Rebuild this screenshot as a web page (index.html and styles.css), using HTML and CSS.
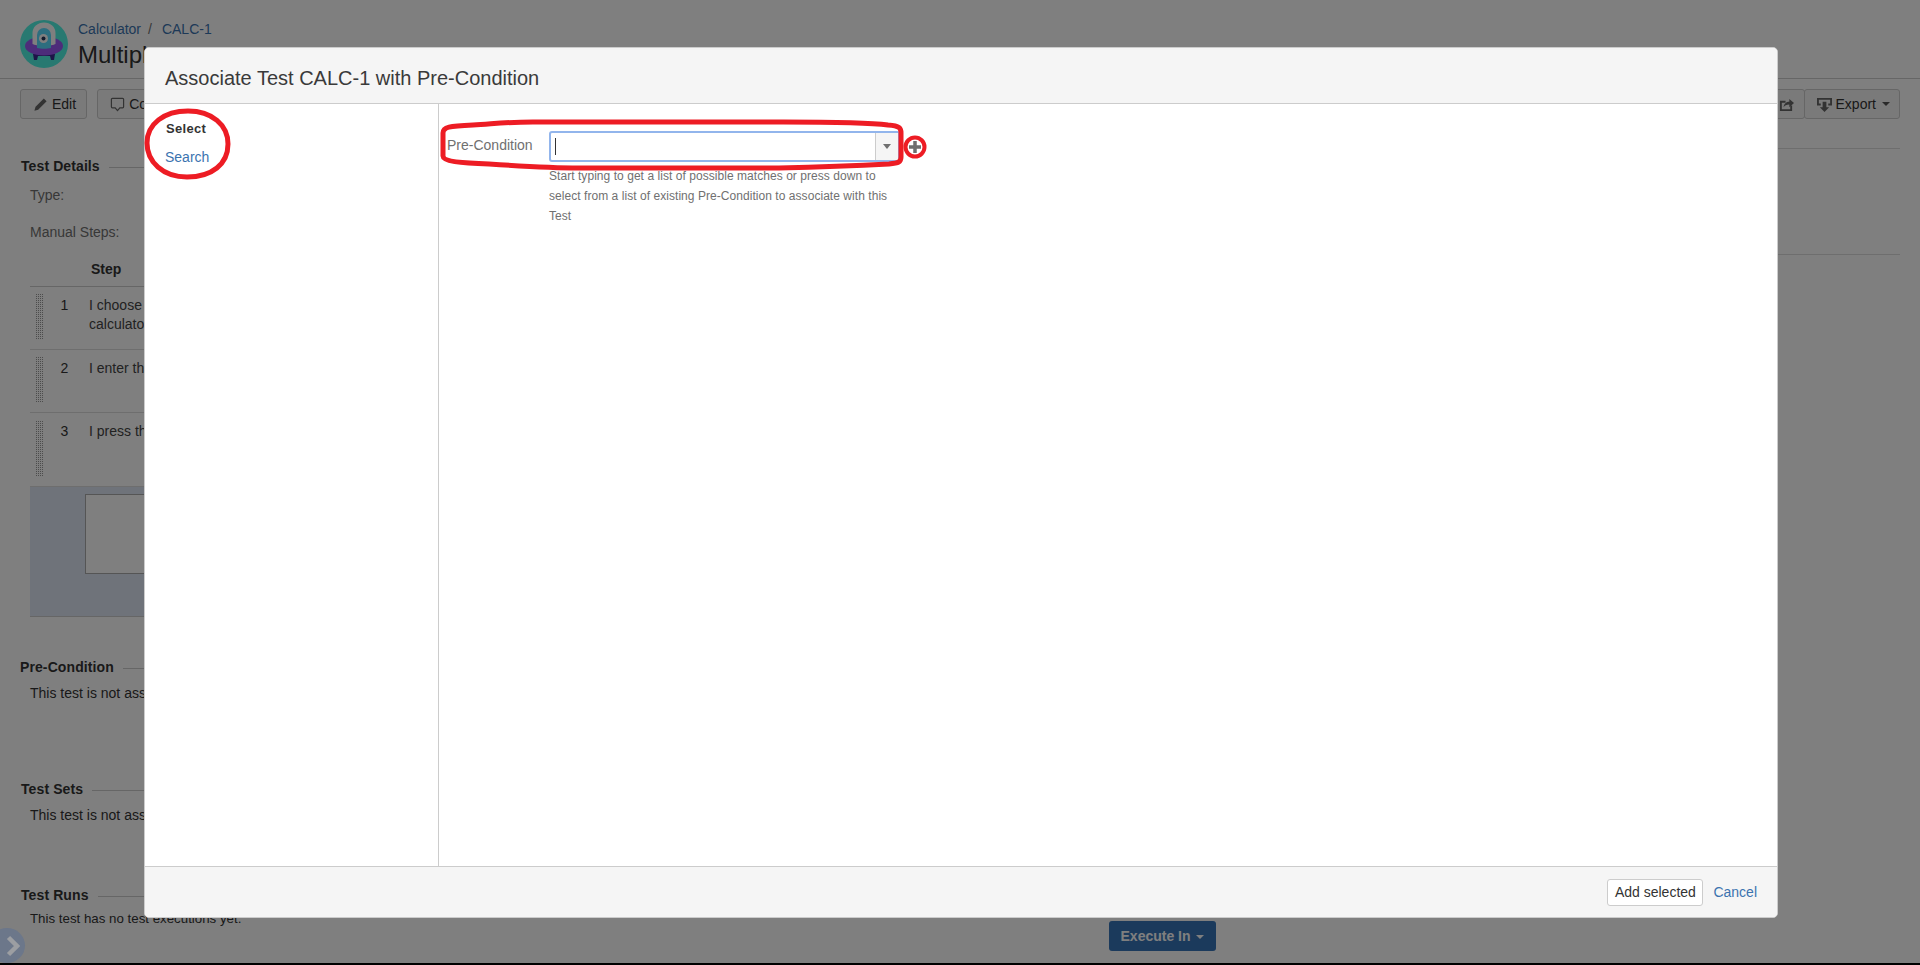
FILE: index.html
```html
<!DOCTYPE html>
<html lang="en">
<head>
    <meta charset="UTF-8">
    <title>CALC-1 Multiply</title>
    <link rel="stylesheet" href="styles.css">
</head>
<body>
    <div class="page">
        <header class="issue-header">
            <svg class="project-logo" viewBox="0 0 48 48">
                <circle cx="24" cy="24" r="24" fill="#50f2e2"/>
                <path d="M13 34l1 6h3l1-4h12l1 4h3l1-6z" fill="#3a2a90"/>
                <ellipse cx="24" cy="26" rx="19" ry="9.500" fill="#9a58f4"/>
                <path d="M12.500 24V13a11.500 10.500 0 0 1 23 0v11c-3 2-20 2-23 0z" fill="#fff"/>
                <path d="M17 28V15a7 7 0 0 1 14 0v13c-4 1-10 1-14 0z" fill="#5adcff"/>
                <circle cx="23.500" cy="18.500" r="4.500" fill="#fff"/>
                <circle cx="23.500" cy="18.500" r="2" fill="#26365a"/>
            </svg>
            <div class="issue-title">
                <div class="breadcrumbs"><a href="#">Calculator</a><span class="crumb-sep">/</span><a href="#">CALC-1</a></div>
                <h1>Multiply</h1>
            </div>
        </header>

        <div class="toolbar">
            <div class="btn-group">
                <button class="btn">
                    <svg class="btn-icon" viewBox="0 0 16 16"><path d="M11.500 1.500l3 3-9 9-4 1.200 1.200-4.200z" fill="#666"/></svg>
                    Edit
                </button>
                <button class="btn">
                    <svg class="btn-icon" viewBox="0 0 16 16"><path d="M2.500 1.500h11a1 1 0 0 1 1 1v8a1 1 0 0 1-1 1h-3l-2.500 3-2.500-3h-3a1 1 0 0 1-1-1v-8a1 1 0 0 1 1-1z" fill="none" stroke="#666" stroke-width="1.300"/></svg>
                    Comment
                </button>
            </div>
            <div class="btn-group btn-group-joined">
                <button class="btn">
                    <svg class="btn-icon" viewBox="0 0 16 16"><path d="M13 9v5H2V5h5" fill="none" stroke="#666" stroke-width="2"/><path d="M5 11c0-4 3-6 6-6V2l5 4.500-5 4.500V8c-3 0-5 1-6 3z" fill="#666"/></svg>
                </button>
                <button class="btn btn-export">
                    <svg class="btn-icon" viewBox="0 0 16 16"><path d="M4 8H1V2h14v6h-3" fill="none" stroke="#666" stroke-width="2"/><path d="M6 5h4v6h3l-5 5-5-5h3z" fill="#666"/></svg>
                    Export
                    <span class="caret"></span>
                </button>
            </div>
        </div>

        <div class="columns">
            <main class="main-col">
                <section class="module module-details">
                    <h2 class="module-head"><span>Test Details</span></h2>
                    <div class="field">Type:</div>
                    <div class="field field-steps">Manual Steps:</div>
                    <div class="steps">
                        <div class="step-row step-header">
                            <div class="step-text">Step</div>
                        </div>
                        <div class="step-row">
                            <div class="grip"></div>
                            <div class="step-num">1</div>
                            <div class="step-text">I choose the multiply operation on the<br>calculator</div>
                        </div>
                        <div class="step-row">
                            <div class="grip"></div>
                            <div class="step-num">2</div>
                            <div class="step-text">I enter the numbers</div>
                        </div>
                        <div class="step-row step-row-tall">
                            <div class="grip"></div>
                            <div class="step-num">3</div>
                            <div class="step-text">I press the equals button</div>
                        </div>
                        <div class="step-new">
                            <div class="step-new-box"></div>
                        </div>
                    </div>
                </section>

                <section class="module module-precondition">
                    <h2 class="module-head"><span>Pre-Condition</span></h2>
                    <p class="module-text">This test is not associated with any Pre-Condition.</p>
                </section>

                <section class="module module-sets">
                    <h2 class="module-head"><span>Test Sets</span></h2>
                    <p class="module-text">This test is not associated with any Test Set.</p>
                </section>

                <section class="module module-runs">
                    <h2 class="module-head"><span>Test Runs</span></h2>
                    <p class="module-text">This test has no test executions yet.</p>
                </section>
            </main>
            <aside class="side-col">
                <div class="side-block"></div>
                <div class="side-block"></div>
            </aside>
        </div>

        <button class="execute-btn">Execute In <span class="caret caret-light"></span></button>
        <div class="blanket"></div>
    </div>

    <div class="sidebar-toggle">
        <svg viewBox="0 0 14 22" class="toggle-chevron"><path d="M2.500 2.500l8.500 8.500-8.500 8.500" fill="none" stroke="#9c9ea2" stroke-width="4.500"/></svg>
    </div>

    <div class="dialog">
        <div class="dialog-header">Associate Test CALC-1 with Pre-Condition</div>
        <div class="dialog-body">
            <nav class="dialog-nav">
                <div class="nav-item nav-item-active">Select</div>
                <a class="nav-item" href="#">Search</a>
            </nav>
            <div class="dialog-content">
                <div class="form-row">
                    <label class="form-label">Pre-Condition</label>
                    <div class="form-control">
                        <div class="picker">
                            <span class="picker-cursor"></span>
                            <span class="picker-drop"><span class="caret"></span></span>
                        </div>
                        <p class="form-help">Start typing to get a list of possible matches or press down to select from a list of existing Pre-Condition to associate with this Test</p>
                    </div>
                </div>
            </div>
        </div>
        <div class="dialog-footer">
            <button class="btn-add">Add selected</button>
            <a class="cancel-link" href="#">Cancel</a>
        </div>
    </div>

    <!-- red markers drawn on top of the screenshot -->
    <svg class="markers" viewBox="0 0 1920 965">
        <path class="marker" d="M188 111c24 0 40 14 40 33 0 20-16 33-41 33-24 0-40-15-40-34 0-19 17-32 41-32z"/>
        <path class="marker" d="M443 133c0-6 6-7 30-8 20-1 30-3 60-3h250c40 0 90 1 105 3 12 1 13 3 13 8v24c0 5-2 6-12 7-40 2-70 3-110 4h-200c-30 0-60-2-90-4-30-1-46-3-46-8z"/>
        <circle class="marker marker-ring" cx="915" cy="147" r="9.500"/>
        <path d="M915 141v12M909 147h12" stroke="#6e6e6e" stroke-width="3.500" fill="none"/>
    </svg>
</body>
</html>
```

FILE: styles.css
```css
* {
    box-sizing: border-box;
}

html, body {
    margin: 0;
    height: 965px;
    overflow: hidden;
    background: #000;
}

body {
    position: relative;
    font-family: "Liberation Sans", Arial, sans-serif;
    font-size: 14px;
    line-height: 20px;
    color: #333;
}

a {
    color: #3b73af;
    text-decoration: none;
}

.page {
    position: relative;
    height: 963px;
    background: #fff;
    overflow: hidden;
}

.blanket {
    position: absolute;
    inset: 0;
    background: rgba(0,0,0,0.5);
}

/* issue header */
.issue-header {
    display: flex;
    align-items: center;
    gap: 10px;
    height: 79px;
    padding: 10px 20px 0;
    border-bottom: 1px solid #ccc;
}

.project-logo {
    width: 48px;
    height: 48px;
    flex: none;
}

.breadcrumbs {
    height: 20px;
}

.crumb-sep {
    margin: 0 10px 0 7px;
    color: #707070;
}

h1 {
    margin: 1px 0 0;
    font-size: 24px;
    font-weight: 400;
    line-height: 30px;
}

/* toolbar */
.toolbar {
    display: flex;
    justify-content: space-between;
    margin-top: 10px;
    padding: 0 20px;
}

.btn-group {
    display: flex;
    gap: 10px;
}

.btn-group-joined {
    gap: 0;
}

.btn-group-joined .btn + .btn {
    margin-left: -1px;
}

.btn {
    display: flex;
    align-items: center;
    gap: 4px;
    height: 30px;
    padding: 0 10px 0 12px;
    background: #f5f5f5;
    border: 1px solid #ccc;
    border-radius: 3px;
    font: inherit;
    color: #333;
}

.btn-export {
    padding-right: 9px;
}

.btn-icon {
    width: 15px;
    height: 15px;
    flex: none;
}

.caret {
    display: inline-block;
    width: 0;
    height: 0;
    margin-left: 2px;
    border: 4px solid transparent;
    border-top-color: #555;
    border-bottom: 0;
    vertical-align: middle;
}

.caret-light {
    border-top-color: #fff;
}

/* page columns */
.columns {
    display: flex;
}

.main-col {
    flex: 1;
    padding-left: 20px;
}

.side-col {
    width: 500px;
    padding: 29px 20px 0 0;
}

.side-block {
    height: 106px;
    border-top: 1px solid #ddd;
}

.module-head {
    display: flex;
    align-items: center;
    gap: 9px;
    margin: 0 0 0 1px;
    font-size: 14px;
    font-weight: 700;
    line-height: 20px;
    letter-spacing: 0.1px;
}

.module-head::after {
    content: "";
    flex: 1;
    margin-top: 3px;
    border-top: 1px solid #ccc;
}

.module-details {
    margin-top: 37px;
}

.module-precondition {
    margin-top: 40px;
}

.module-precondition .module-head {
    margin-left: 0;
}

.module-sets {
    margin-top: 76px;
}

.module-runs {
    margin-top: 60px;
}

.module-text {
    margin: 6px 0 0 10px;
    color: #333;
}

.module-runs .module-text {
    margin-top: 4px;
    font-size: 13.3px;
}

.field {
    margin: 9px 0 0 10px;
    color: #707070;
}

.field-steps {
    margin-top: 17px;
}

/* steps table */
.steps {
    margin: 10px 0 0 10px;
}

.step-row {
    display: flex;
    height: 63px;
    padding-top: 9px;
    border-bottom: 1px solid #ddd;
}

.step-header {
    height: 35px;
    padding: 7px 0 0 61px;
    font-weight: 700;
    border-bottom-color: #ccc;
}

.step-row-tall {
    height: 74px;
}

.grip {
    width: 8px;
    height: calc(100% - 7px);
    margin: -2px 0 0 5px;
    background-color: #999;
    background-image:
        repeating-linear-gradient(90deg, #fff 0 1px, transparent 1px 2px),
        repeating-linear-gradient(0deg, #fff 0 1px, transparent 1px 2px);
    flex: none;
}

.step-num {
    width: 43px;
    text-align: center;
    line-height: 19px;
    flex: none;
}

.step-text {
    margin-left: 3px;
    line-height: 19px;
    color: #444;
}

.step-header .step-text {
    margin-left: 0;
    line-height: 20px;
    color: #333;
}

.step-new {
    height: 130px;
    padding: 7px 0 0 55px;
    background: #dfe6f4;
    border-bottom: 1px solid #ccc;
}

.step-new-box {
    width: 420px;
    height: 80px;
    background: #fff;
    border: 1px solid #aaa;
}

/* bottom floating items */
.execute-btn {
    position: absolute;
    left: 1109px;
    top: 921px;
    width: 107px;
    height: 30px;
    background: #3674b8;
    border: 0;
    border-radius: 3px;
    font: inherit;
    font-weight: 700;
    color: #fff;
}

.sidebar-toggle {
    position: absolute;
    left: -11px;
    top: 928px;
    width: 36px;
    height: 35px;
    display: flex;
    align-items: center;
    justify-content: flex-end;
    padding-right: 5px;
    background: #6c778a;
    border-radius: 50%;
}

.toggle-chevron {
    width: 14px;
    height: 22px;
}

/* dialog */
.dialog {
    position: absolute;
    left: 144px;
    top: 47px;
    width: 1634px;
    height: 871px;
    display: flex;
    flex-direction: column;
    background: #fff;
    border: 1px solid #ccc;
    border-radius: 5px;
    overflow: hidden;
}

.dialog-header {
    height: 56px;
    padding: 16px 20px 0;
    background: #f5f5f5;
    border-bottom: 1px solid #ccc;
    font-size: 20px;
    line-height: 28px;
    color: #3a3a3a;
}

.dialog-body {
    flex: 1;
    display: flex;
}

.dialog-nav {
    width: 294px;
    padding: 15px 0 0 20px;
    border-right: 1px solid #ccc;
}

.nav-item {
    display: block;
    height: 28px;
    line-height: 20px;
}

.nav-item-active {
    padding-left: 1px;
    font-size: 13px;
    font-weight: 700;
    letter-spacing: 0.3px;
}

.dialog-content {
    flex: 1;
    padding: 27px 0 0 8px;
}

.form-row {
    display: flex;
}

.form-label {
    width: 102px;
    padding-top: 4px;
    color: #707070;
}

.form-control {
    width: 351px;
}

.picker {
    position: relative;
    height: 31px;
    background: #fff;
    border: 2px solid #92b5ec;
    border-radius: 3px;
}

.picker-cursor {
    position: absolute;
    left: 4px;
    top: 5px;
    width: 1px;
    height: 17px;
    background: #333;
}

.picker-drop {
    position: absolute;
    right: 0;
    top: 0;
    bottom: 0;
    width: 23px;
    display: flex;
    align-items: center;
    justify-content: center;
    background: #f5f5f5;
    border-left: 1px solid #ccc;
}

.picker-drop .caret {
    margin: 0;
    border-width: 5px 4px 0;
    border-top-color: #707070;
}

.form-help {
    width: 345px;
    margin: 4px 0 0;
    font-size: 12px;
    letter-spacing: 0.05px;
    color: #707070;
}

.dialog-footer {
    height: 51px;
    display: flex;
    align-items: center;
    justify-content: flex-end;
    gap: 10px;
    padding: 0 20px;
    background: #f5f5f5;
    border-top: 1px solid #ccc;
}

.btn-add {
    width: 96px;
    height: 27px;
    padding: 0;
    background: #fff;
    border: 1px solid #ccc;
    border-radius: 3px;
    font: inherit;
    color: #333;
}

/* annotation layer */
.markers {
    position: absolute;
    left: 0;
    top: 0;
    width: 1920px;
    height: 965px;
    pointer-events: none;
}

.marker {
    fill: none;
    stroke: #ed1c24;
    stroke-width: 5;
}

.marker-ring {
    stroke-width: 4;
}
```
